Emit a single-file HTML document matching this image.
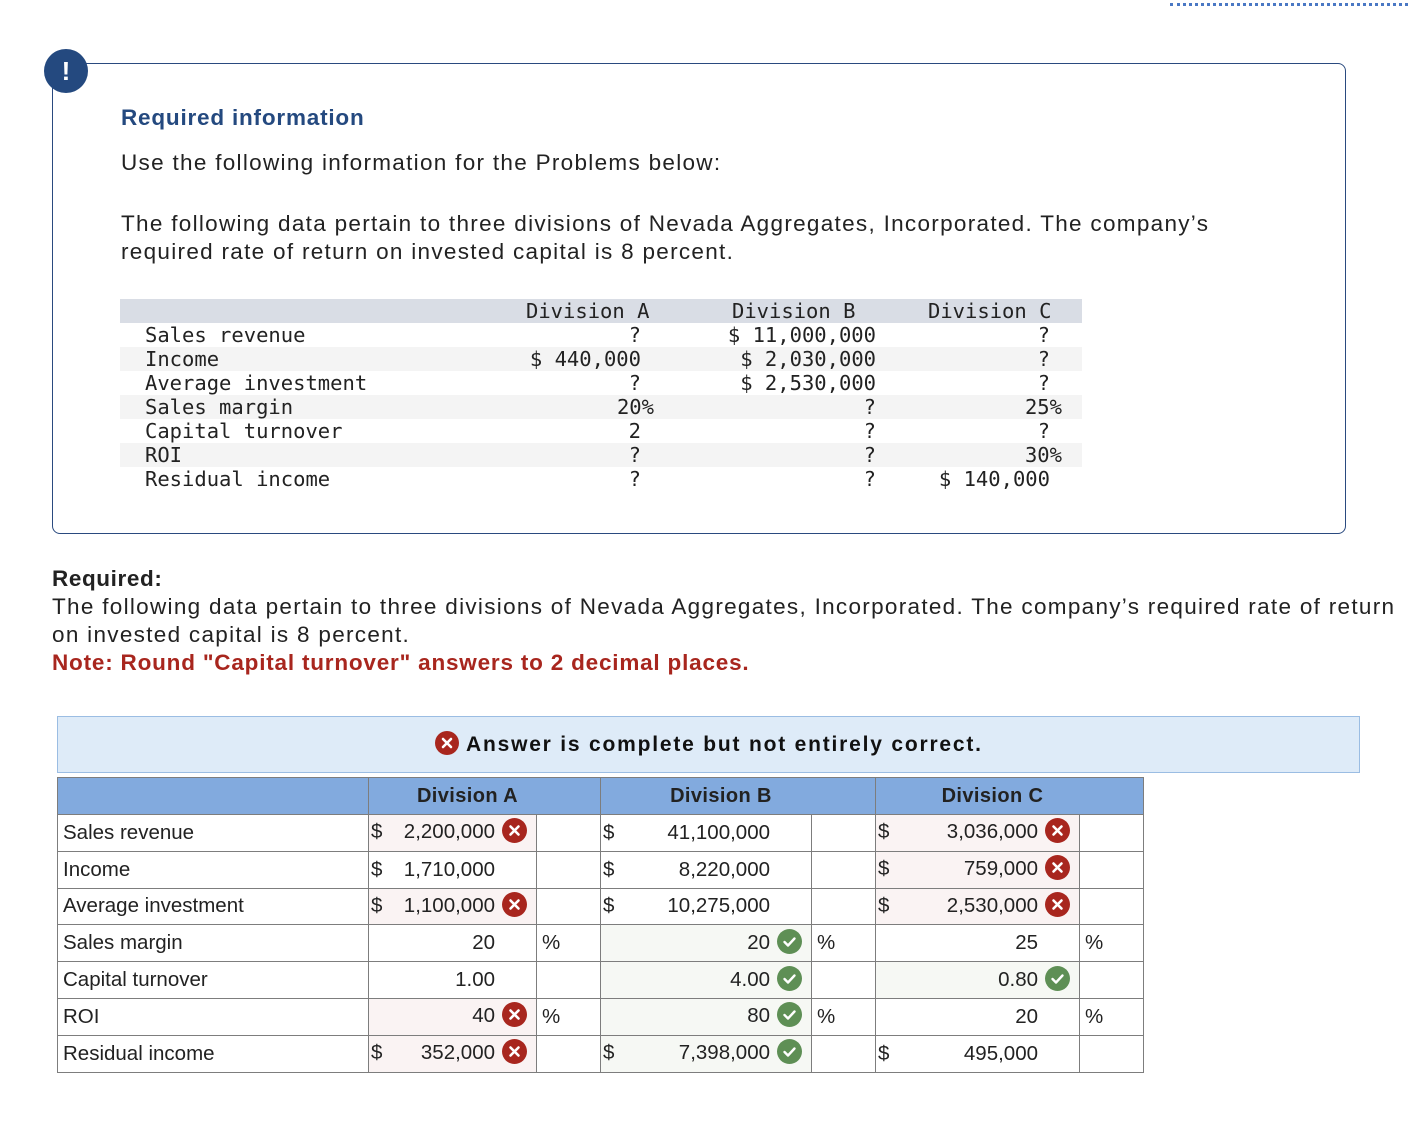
<!DOCTYPE html>
<html><head><meta charset="utf-8"><style>
*{margin:0;padding:0;box-sizing:border-box}
body{width:1418px;height:1122px;background:#fff;position:relative;overflow:hidden;font-family:"Liberation Sans",Arial,sans-serif;color:#222}
.abs{position:absolute;white-space:nowrap}
.box{position:absolute;left:52px;top:63px;width:1294px;height:471px;border:1.5px solid #2a4a7f;border-radius:8px}
.bang{position:absolute;left:44px;top:49px;width:44px;height:44px;border-radius:50%;background:#24497f;color:#fff;font-weight:bold;font-size:26px;text-align:center;line-height:44px}
.mono{font-family:"DejaVu Sans Mono","Liberation Mono",monospace;font-size:20.5px;color:#222}
.r{position:absolute;height:24px;left:120px;width:962px}
.t{position:absolute;line-height:24px;white-space:nowrap}
table{position:absolute;left:57px;top:777px;border-collapse:collapse;font-size:20.5px;color:#222}
td{border:1.5px solid #7d7d7d;height:36.8px;padding:0 9px 0 5px;white-space:nowrap}
td:first-child{padding-left:5px}
th{background:#82aade;border:1.5px solid #7d7d7d;height:37px;font-size:20px;font-weight:bold;color:#222;letter-spacing:0.4px;padding-right:34px}
.bad{background:#faf3f3}.good{background:#f6f8f4}
.v{text-align:right}
.ic{display:inline-block;width:25px;height:25px;border-radius:50%;vertical-align:middle;margin-left:7px;position:relative;top:-2px}
.x{background:#a8261e}.c{background:#5e8f55}
.ic svg{position:absolute;left:0;top:0}
.sp{display:inline-block;width:32px}
.p{font-size:22.5px;letter-spacing:1.3px}
</style></head><body>
<div class="abs" style="left:1170px;top:3px;width:238px;border-top:3px dotted #4a78c4"></div>
<div class="box"></div>
<div class="bang">!</div>
<div class="abs" style="left:121px;top:105px;font-size:22.5px;font-weight:bold;color:#24497f;letter-spacing:0.8px">Required information</div>
<div class="abs p" style="left:121px;top:150px">Use the following information for the Problems below:</div>
<div class="abs p" style="left:121px;top:210px;line-height:28px">The following data pertain to three divisions of Nevada Aggregates, Incorporated. The company’s<br>required rate of return on invested capital is 8 percent.</div>

<div class="r" style="top:299px;background:#d9dde5"></div>
<div class="r" style="top:347px;background:#f4f4f4"></div>
<div class="r" style="top:395px;background:#f4f4f4"></div>
<div class="r" style="top:443px;background:#f4f4f4"></div>
<div class="mono">
<div class="t" style="left:526px;top:299px">Division A</div>
<div class="t" style="left:732px;top:299px">Division B</div>
<div class="t" style="left:928px;top:299px">Division C</div>
<div class="t" style="left:145px;top:323px;line-height:24px">Sales revenue<br>Income<br>Average investment<br>Sales margin<br>Capital turnover<br>ROI<br>Residual income</div>
<div class="t" style="right:777px;top:323px">?</div>
<div class="t" style="right:777px;top:347px">$ 440,000</div>
<div class="t" style="right:777px;top:371px">?</div>
<div class="t" style="right:764px;top:395px">20%</div>
<div class="t" style="right:777px;top:419px">2</div>
<div class="t" style="right:777px;top:443px">?</div>
<div class="t" style="right:777px;top:467px">?</div>
<div class="t" style="right:542px;top:323px;text-align:right;line-height:24px">$ 11,000,000<br>$ 2,030,000<br>$ 2,530,000<br>?<br>?<br>?<br>?</div>
<div class="t" style="right:368px;top:323px">?</div>
<div class="t" style="right:368px;top:347px">?</div>
<div class="t" style="right:368px;top:371px">?</div>
<div class="t" style="right:356px;top:395px">25%</div>
<div class="t" style="right:368px;top:419px">?</div>
<div class="t" style="right:356px;top:443px">30%</div>
<div class="t" style="right:368px;top:467px">$ 140,000</div>
</div>

<div class="abs p" style="left:52px;top:565px;line-height:28px"><b style="letter-spacing:0.6px">Required:</b><br>The following data pertain to three divisions of Nevada Aggregates, Incorporated. The company’s required rate of return<br>on invested capital is 8 percent.<br><b style="color:#a8261e;letter-spacing:0.8px">Note: Round "Capital turnover" answers to 2 decimal places.</b></div>

<div class="abs" style="left:57px;top:716px;width:1303px;height:57px;background:#deebf8;border:1.5px solid #9bbde3"></div>
<div class="abs" style="left:435px;top:731px;font-size:21px;font-weight:bold;color:#111;line-height:27px;letter-spacing:1.8px"><span class="ic x" style="margin:0 7px 0 0;top:-2px;width:24px;height:24px"><svg width="24" height="24"><path d="M8 8L16 16M16 8L8 16" stroke="#fff" stroke-width="2.6" stroke-linecap="round"/></svg></span>Answer is complete but not entirely correct.</div>

<table>
<colgroup><col style="width:311px"><col style="width:168px"><col style="width:64px"><col style="width:211px"><col style="width:64px"><col style="width:204px"><col style="width:64px"></colgroup>
<tr><th style="padding:0"></th><th colspan="2">Division A</th><th colspan="2">Division B</th><th colspan="2">Division C</th></tr>
<tr><td>Sales revenue</td><td class="bad" style="padding-left:2px">$<span style="float:right">2,200,000<span class="ic x"><svg width="25" height="25"><path d="M8.5 8.5L16.5 16.5M16.5 8.5L8.5 16.5" stroke="#fff" stroke-width="2.6" stroke-linecap="round"/></svg></span></span></td><td></td><td style="padding-left:2px">$<span style="float:right">41,100,000<span class="sp"></span></span></td><td></td><td class="bad" style="padding-left:2px">$<span style="float:right">3,036,000<span class="ic x"><svg width="25" height="25"><path d="M8.5 8.5L16.5 16.5M16.5 8.5L8.5 16.5" stroke="#fff" stroke-width="2.6" stroke-linecap="round"/></svg></span></span></td><td></td></tr>
<tr><td>Income</td><td style="padding-left:2px">$<span style="float:right">1,710,000<span class="sp"></span></span></td><td></td><td style="padding-left:2px">$<span style="float:right">8,220,000<span class="sp"></span></span></td><td></td><td class="bad" style="padding-left:2px">$<span style="float:right">759,000<span class="ic x"><svg width="25" height="25"><path d="M8.5 8.5L16.5 16.5M16.5 8.5L8.5 16.5" stroke="#fff" stroke-width="2.6" stroke-linecap="round"/></svg></span></span></td><td></td></tr>
<tr><td>Average investment</td><td class="bad" style="padding-left:2px">$<span style="float:right">1,100,000<span class="ic x"><svg width="25" height="25"><path d="M8.5 8.5L16.5 16.5M16.5 8.5L8.5 16.5" stroke="#fff" stroke-width="2.6" stroke-linecap="round"/></svg></span></span></td><td></td><td style="padding-left:2px">$<span style="float:right">10,275,000<span class="sp"></span></span></td><td></td><td class="bad" style="padding-left:2px">$<span style="float:right">2,530,000<span class="ic x"><svg width="25" height="25"><path d="M8.5 8.5L16.5 16.5M16.5 8.5L8.5 16.5" stroke="#fff" stroke-width="2.6" stroke-linecap="round"/></svg></span></span></td><td></td></tr>
<tr><td>Sales margin</td><td class="v">20<span class="sp"></span></td><td>%</td><td class="v good">20<span class="ic c"><svg width="25" height="25"><path d="M7.5 13L11 16.5L17.5 9.5" stroke="#fff" stroke-width="2.4" fill="none" stroke-linecap="round" stroke-linejoin="round"/></svg></span></td><td>%</td><td class="v">25<span class="sp"></span></td><td>%</td></tr>
<tr><td>Capital turnover</td><td class="v">1.00<span class="sp"></span></td><td></td><td class="v good">4.00<span class="ic c"><svg width="25" height="25"><path d="M7.5 13L11 16.5L17.5 9.5" stroke="#fff" stroke-width="2.4" fill="none" stroke-linecap="round" stroke-linejoin="round"/></svg></span></td><td></td><td class="v good">0.80<span class="ic c"><svg width="25" height="25"><path d="M7.5 13L11 16.5L17.5 9.5" stroke="#fff" stroke-width="2.4" fill="none" stroke-linecap="round" stroke-linejoin="round"/></svg></span></td><td></td></tr>
<tr><td>ROI</td><td class="v bad">40<span class="ic x"><svg width="25" height="25"><path d="M8.5 8.5L16.5 16.5M16.5 8.5L8.5 16.5" stroke="#fff" stroke-width="2.6" stroke-linecap="round"/></svg></span></td><td>%</td><td class="v good">80<span class="ic c"><svg width="25" height="25"><path d="M7.5 13L11 16.5L17.5 9.5" stroke="#fff" stroke-width="2.4" fill="none" stroke-linecap="round" stroke-linejoin="round"/></svg></span></td><td>%</td><td class="v">20<span class="sp"></span></td><td>%</td></tr>
<tr><td>Residual income</td><td class="bad" style="padding-left:2px">$<span style="float:right">352,000<span class="ic x"><svg width="25" height="25"><path d="M8.5 8.5L16.5 16.5M16.5 8.5L8.5 16.5" stroke="#fff" stroke-width="2.6" stroke-linecap="round"/></svg></span></span></td><td></td><td class="good" style="padding-left:2px">$<span style="float:right">7,398,000<span class="ic c"><svg width="25" height="25"><path d="M7.5 13L11 16.5L17.5 9.5" stroke="#fff" stroke-width="2.4" fill="none" stroke-linecap="round" stroke-linejoin="round"/></svg></span></span></td><td></td><td style="padding-left:2px">$<span style="float:right">495,000<span class="sp"></span></span></td><td></td></tr>
</table>
</body></html>
